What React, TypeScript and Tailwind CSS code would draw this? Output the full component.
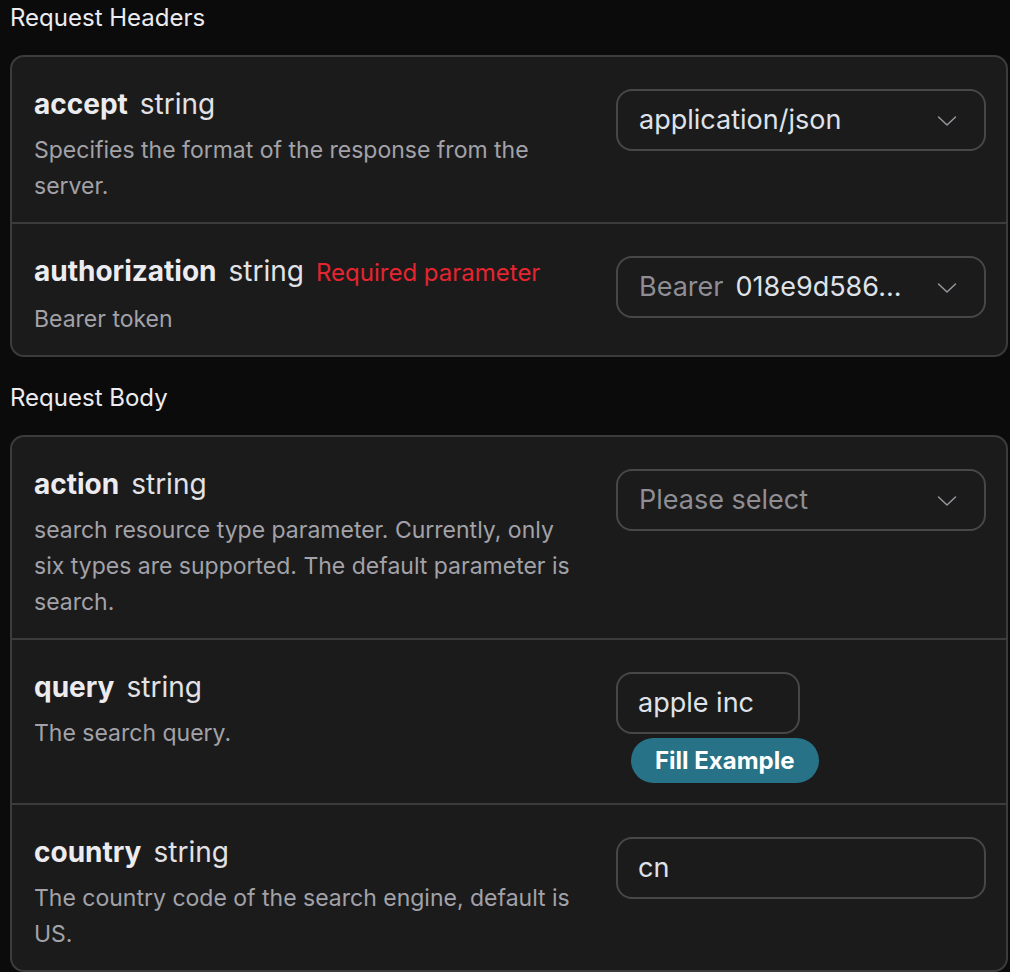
import React from 'react';

type Param = {
  name: string;
  type: string;
  required?: boolean;
  description: string;
  control: React.ReactNode;
};

const Chevron = () => (
  <svg width="20" height="12" viewBox="0 0 20 12" fill="none" className="mt-[2px] shrink-0">
    <path d="M1.5 2 L10 10 L18.5 2" stroke="#96969c" strokeWidth="1.5" strokeLinecap="round" strokeLinejoin="round" />
  </svg>
);

const SelectBox = ({ children }: { children: React.ReactNode }) => (
  <div className="flex h-[62px] w-[370px] items-center justify-between rounded-[16px] border-2 border-[#474749] pl-[21px] pr-[27px]">
    <div className="flex items-center gap-[12px] overflow-hidden whitespace-nowrap text-[27px]">{children}</div>
    <Chevron />
  </div>
);

const InputBox = ({ value, width }: { value: string; width: string }) => (
  <div className={`flex h-[62px] ${width} items-center rounded-[16px] border-2 border-[#474749] pl-[20px] text-[27px] text-[#dfe2e8]`}>
    {value}
  </div>
);

const ParamRow = ({ param, last }: { param: Param; last?: boolean }) => (
  <div className={`flex gap-[27px] pb-[18px] pl-[22px] pr-[20px] pt-[32px] ${last ? '' : 'border-b-2 border-[#3c3c3e]'}`}>
    <div className="min-w-0 flex-1">
      <div className="flex items-baseline gap-[12px] leading-[30px]">
        <span className="text-[28px] font-bold text-[#ececf0]">{param.name}</span>
        <span className="text-[28px] text-[#e2e2e6]">{param.type}</span>
        {param.required && <span className="text-[24px] text-[#e5252f]">Required parameter</span>}
      </div>
      <p className="mt-[13px] text-[23px] leading-[36px] text-[#a2a2a8]">{param.description}</p>
    </div>
    <div className="w-[370px] shrink-0">{param.control}</div>
  </div>
);

const headers: Param[] = [
  {
    name: 'accept',
    type: 'string',
    description: 'Specifies the format of the response from the server.',
    control: (
      <SelectBox>
        <span className="text-[#dfe2e8]">application/json</span>
      </SelectBox>
    ),
  },
  {
    name: 'authorization',
    type: 'string',
    required: true,
    description: 'Bearer token',
    control: (
      <SelectBox>
        <span className="text-[#8e8e94]">Bearer</span>
        <span className="text-[#dfe2e8]">018e9d586...</span>
      </SelectBox>
    ),
  },
];

const body: Param[] = [
  {
    name: 'action',
    type: 'string',
    description:
      'search resource type parameter. Currently, only six types are supported. The default parameter is search.',
    control: (
      <SelectBox>
        <span className="text-[#8e8e94]">Please select</span>
      </SelectBox>
    ),
  },
  {
    name: 'query',
    type: 'string',
    description: 'The search query.',
    control: (
      <div className="flex flex-col items-start">
        <InputBox value="apple inc" width="w-[184px]" />
        <button className="ml-[15px] mt-[4px] mb-[2px] h-[45px] rounded-full bg-[#277286] px-[24px] text-[24px] font-bold text-white">
          Fill Example
        </button>
      </div>
    ),
  },
  {
    name: 'country',
    type: 'string',
    description: 'The country code of the search engine, default is US.',
    control: <InputBox value="cn" width="w-[370px]" />,
  },
];

const Section = ({ title, params }: { title: string; params: Param[] }) => (
  <section>
    <h2 className="text-[24px] leading-[36px] text-[#ececf0]">{title}</h2>
    <div className="mt-[19px] w-[998px] overflow-hidden rounded-[14px] border-2 border-[#3c3c3e] bg-[#1b1b1c]">
      {params.map((p, i) => (
        <ParamRow key={p.name} param={p} last={i === params.length - 1} />
      ))}
    </div>
  </section>
);

export default function App() {
  return (
    <div
      className="min-h-[972px] bg-[#0b0b0b] pl-[10px]"
      style={{ fontFamily: 'Inter, "Noto Sans", sans-serif' }}
    >
      <div className="flex flex-col gap-[23px]">
        <Section title="Request Headers" params={headers} />
        <Section title="Request Body" params={body} />
      </div>
    </div>
  );
}
